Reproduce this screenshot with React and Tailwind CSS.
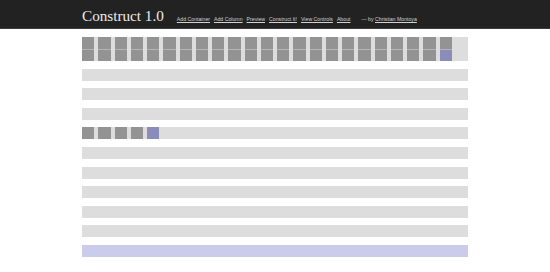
import React from "react";

const links = ["Add Container", "Add Column", "Preview", "Construct It!", "View Controls", "About"];

function Column({ accent }) {
  return (
    <div className="flex flex-col gap-px bg-[#b4b4b4]">
      <div className="h-[12px] bg-[#939393]" />
      <div className={"h-[11px] " + (accent ? "bg-[#8c8cba]" : "bg-[#939393]")} />
    </div>
  );
}

function Row({ children, purple }) {
  return (
    <div className={"flex h-[12px] gap-1 " + (purple ? "bg-[#cbcbec]" : "bg-[#dddddd]")}>
      {children}
    </div>
  );
}

export default function App() {
  const top = Array.from({ length: 23 }, (_, i) => i);
  return (
    <div className="w-[550px] h-[272px] bg-white overflow-hidden">
      <div className="h-[29px] bg-[#222222] border-b border-[#3a3a3a]">
        <div className="w-[386px] mx-auto flex items-baseline pt-[6px]">
          <span className="text-[15.2px] leading-[19px] text-[#ececec] font-['Liberation_Serif',serif]">
            Construct 1.0
          </span>
          <nav className="ml-[13px] flex gap-[4px] text-[5.2px] text-[#d0d0d0] font-['Liberation_Sans',sans-serif]">
            {links.map((l) => (
              <a key={l} href="#" className="underline">
                {l}
              </a>
            ))}
            <span className="ml-[7px]">
              — by <a href="#" className="underline">Christian Montoya</a>
            </span>
          </nav>
        </div>
      </div>

      <div className="w-[386px] mx-auto mt-[8px] flex flex-col gap-[7.6px]">
        <div className="grid grid-cols-24 gap-1 bg-[#dddddd] h-[24px]">
          {top.map((i) => (
            <Column key={i} accent={i === 22} />
          ))}
        </div>
        <Row />
        <Row />
        <Row />
        <Row>
          {[0, 1, 2, 3, 4].map((i) => (
            <div key={i} className={"w-[12.25px] h-full " + (i === 4 ? "bg-[#8c8cba]" : "bg-[#939393]")} />
          ))}
        </Row>
        <Row />
        <Row />
        <Row />
        <Row />
        <Row />
        <Row purple />
      </div>
    </div>
  );
}
